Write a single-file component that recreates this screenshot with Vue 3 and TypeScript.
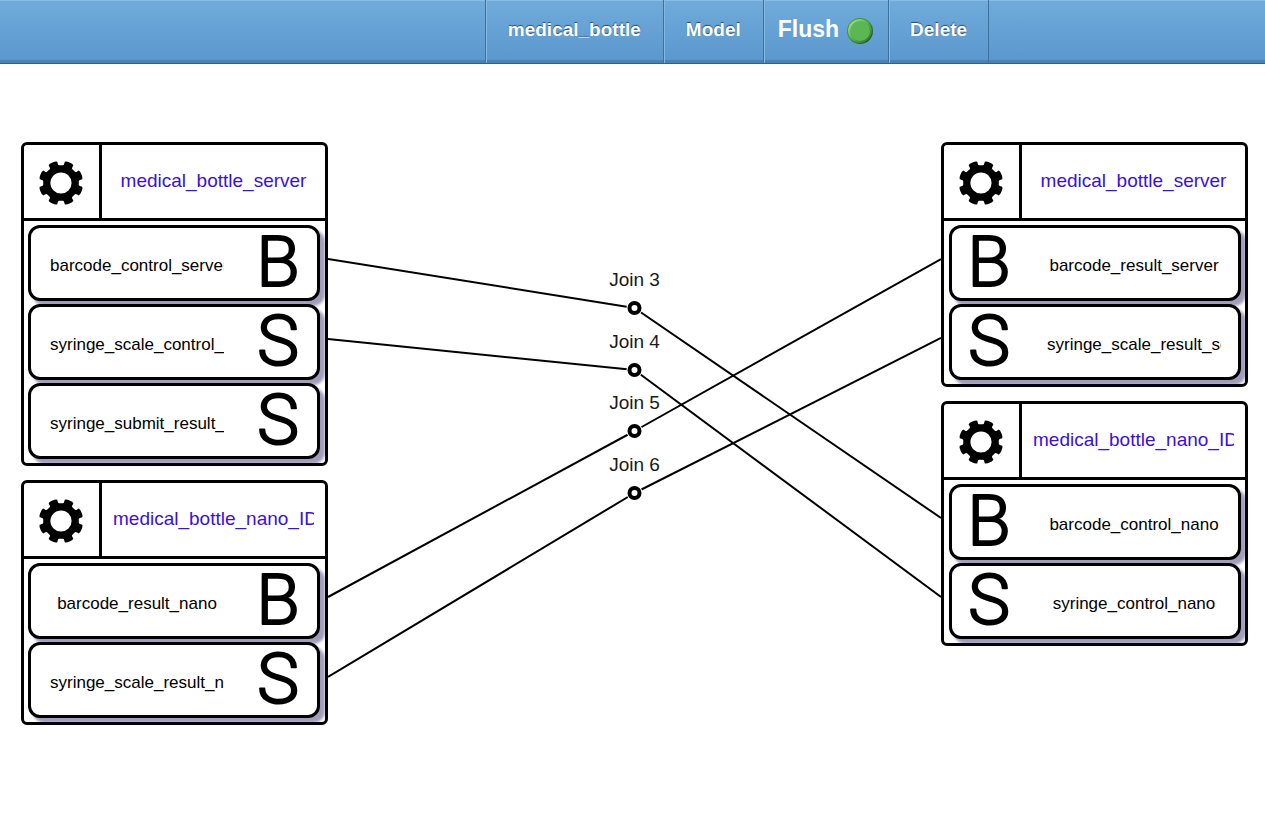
<script setup lang="ts">
interface Port {
  kind: 'B' | 'S'
  label: string
}
interface Node {
  title: string
  ports: Port[]
}
interface Join {
  label: string
  y: number
  from: number
  to: number
}

const columns: { side: 'left' | 'right'; nodes: Node[] }[] = [
  {
    side: 'left',
    nodes: [
      {
        title: 'medical_bottle_server',
        ports: [
          { kind: 'B', label: 'barcode_control_server' },
          { kind: 'S', label: 'syringe_scale_control_server' },
          { kind: 'S', label: 'syringe_submit_result_server' },
        ],
      },
      {
        title: 'medical_bottle_nano_ID',
        ports: [
          { kind: 'B', label: 'barcode_result_nano' },
          { kind: 'S', label: 'syringe_scale_result_nano' },
        ],
      },
    ],
  },
  {
    side: 'right',
    nodes: [
      {
        title: 'medical_bottle_server',
        ports: [
          { kind: 'B', label: 'barcode_result_server' },
          { kind: 'S', label: 'syringe_scale_result_server' },
        ],
      },
      {
        title: 'medical_bottle_nano_ID',
        ports: [
          { kind: 'B', label: 'barcode_control_nano' },
          { kind: 'S', label: 'syringe_control_nano' },
        ],
      },
    ],
  },
]

const joins: Join[] = [
  { label: 'Join 3', y: 166, from: 117, to: 376 },
  { label: 'Join 4', y: 228, from: 197, to: 455 },
  { label: 'Join 5', y: 289, from: 455, to: 117 },
  { label: 'Join 6', y: 351, from: 535, to: 196 },
]

// Outline of an eight-tooth gear around the origin
function gearOutline(): string {
  const at = (r: number, deg: number): string => {
    const a = (deg * Math.PI) / 180
    return `${(r * Math.cos(a)).toFixed(2)} ${(r * Math.sin(a)).toFixed(2)}`
  }
  let d = ''
  for (let i = 0; i < 8; i++) {
    const c = 22.5 + i * 45
    d += `${i ? 'L' : 'M'}${at(21.6, c - 12.5)} Q${at(22.6, c - 9)} ${at(22.2, c)} Q${at(22.6, c + 9)} ${at(21.6, c + 12.5)} `
    d += `L${at(19.8, c + 13)} Q${at(18.4, c + 13)} ${at(17.9, c + 16)} L${at(17.9, c + 29)} Q${at(18.4, c + 32)} ${at(19.8, c + 32)} `
  }
  return d + 'Z M10.6 0 A10.6 10.6 0 1 0 -10.6 0 A10.6 10.6 0 1 0 10.6 0 Z'
}
const gear = gearOutline()
</script>

<template>
  <div class="page">
    <nav class="bar">
      <a class="tab" href="#">medical_bottle</a>
      <a class="tab" href="#">Model</a>
      <a class="tab flush" href="#">
        Flush
        <svg class="dot" viewBox="0 0 28 28" aria-hidden="true">
          <defs>
            <linearGradient id="rim" x1="0" y1="0" x2="1" y2="1">
              <stop offset="0.1" stop-color="#4a9a3c" />
              <stop offset="0.5" stop-color="#3f8a35" />
              <stop offset="0.9" stop-color="#1d4a1c" />
            </linearGradient>
            <linearGradient id="bevel" x1="0" y1="0" x2="1" y2="1">
              <stop offset="0.1" stop-color="#a2e08c" />
              <stop offset="0.45" stop-color="#5cb653" />
              <stop offset="0.9" stop-color="#2f7a2c" />
            </linearGradient>
          </defs>
          <circle cx="14" cy="14" r="13" fill="url(#rim)" />
          <circle cx="14" cy="14" r="12" fill="url(#bevel)" />
          <circle cx="14" cy="14" r="10" fill="#5cb653" />
        </svg>
      </a>
      <a class="tab last" href="#">Delete</a>
    </nav>

    <main class="board">
      <template v-for="col in columns" :key="col.side">
        <section class="column" :class="col.side">
          <article v-for="node in col.nodes" :key="node.title" class="card">
            <header class="head">
              <button class="gear" type="button" aria-label="Settings">
                <svg viewBox="-24 -24 48 48"><path :d="gear" fill-rule="evenodd" /></svg>
              </button>
              <div class="title"><a href="#">{{ node.title }}</a></div>
            </header>
            <ul class="ports">
              <li v-for="port in node.ports" :key="port.label" class="port">
                <span class="name"><span>{{ port.label }}</span></span>
                <svg class="kind" viewBox="0 0 76 70">
                  <text x="37" y="58">{{ port.kind }}</text>
                </svg>
              </li>
            </ul>
          </article>
        </section>

        <svg v-if="col.side === 'left'" class="wires">
          <g v-for="j in joins" :key="j.label">
            <line x1="0" :y1="j.from" x2="50%" :y2="j.y" />
            <line x1="50%" :y1="j.y" x2="100%" :y2="j.to" />
          </g>
          <g v-for="j in joins" :key="j.label">
            <circle class="halo" cx="50%" :cy="j.y" r="8" />
            <circle class="ring" cx="50%" :cy="j.y" r="5" />
            <text x="50%" :y="j.y - 22">{{ j.label }}</text>
          </g>
        </svg>
      </template>
    </main>
  </div>
</template>

<style>
body {
  margin: 0;
  background: #fff;
}
</style>

<style scoped>
.page {
  min-height: 100vh;
  font-family: "Liberation Sans", Arial, sans-serif;
  color: #000;
}
.bar {
  display: grid;
  grid-template-columns: 485fr auto auto auto auto 276fr;
  height: 64px;
  box-sizing: border-box;
  border-bottom: 1px solid #2f5f8c;
  background: linear-gradient(#70abdb, #5a97cd);
  box-shadow: inset 0 1px 0 #8bbce2, inset 0 -3px 0 #4b82b4;
}
.tab {
  display: flex;
  align-items: center;
  padding: 0 22px 4px;
  border-left: 1px solid #3d719f;
  box-shadow: inset 1px 0 0 #86b8e0;
  color: #fff;
  font-size: 19px;
  font-weight: bold;
  text-decoration: none;
  text-shadow: 0 -1px 1px #234f78;
}
.tab:first-child {
  grid-column: 2;
}
.tab.last {
  padding: 0 21px 4px;
  border-right: 1px solid #3d719f;
}
.tab.flush {
  gap: 7px;
  padding: 0 14px 4px;
  font-size: 23px;
  text-shadow: none;
}
.dot {
  width: 28px;
  height: 28px;
  margin-top: 2px;
}
.board {
  display: flex;
  padding: 78px 17px 24px 21px;
}
.column {
  display: flex;
  flex-direction: column;
  gap: 14px;
  flex: 0 0 307px;
  min-width: 0;
}
.card {
  border: 3px solid #000;
  border-radius: 6px;
  background: #fff;
}
.head {
  display: flex;
  height: 73px;
  border-bottom: 3px solid #000;
}
.gear {
  display: flex;
  flex: 0 0 78px;
  align-items: center;
  justify-content: center;
  box-sizing: border-box;
  padding: 2px 2px 0 0;
  border: 0;
  border-right: 3px solid #000;
  background: none;
}
.gear svg {
  width: 48px;
  height: 48px;
}
.title {
  display: flex;
  flex: 1;
  align-items: center;
  min-width: 0;
  padding: 0 11px 2px;
}
.title a {
  flex: 1;
  min-width: 0;
  overflow: hidden;
  color: #3a10dc;
  font-size: 19px;
  line-height: 26px;
  text-align: center;
  text-decoration: none;
  white-space: nowrap;
}
.ports {
  display: flex;
  flex-direction: column;
  gap: 3px;
  margin: 0;
  padding: 4px 5px 4px 4px;
  list-style: none;
}
.right .ports {
  padding: 4px 4px 4px 5px;
}
.port {
  display: flex;
  align-items: center;
  justify-content: space-between;
  height: 76px;
  box-sizing: border-box;
  padding-left: 19px;
  border: 3px solid #000;
  border-radius: 12px;
  background: #fff;
  box-shadow: 5px 5px 3px rgba(20, 10, 80, 0.4);
}
.right .port {
  flex-direction: row-reverse;
  padding: 0 17px 0 0;
}
.name {
  display: flex;
  justify-content: center;
  width: 174px;
  padding-top: 5px;
}
.name span {
  overflow: hidden;
  font-size: 17px;
  line-height: 24px;
  white-space: nowrap;
}
.kind {
  width: 76px;
  height: 70px;
}
.kind text {
  font-family: Roboto, "Liberation Sans", sans-serif;
  font-size: 71px;
  font-weight: 300;
  text-anchor: middle;
  stroke: #000;
  stroke-width: 2px;
  stroke-linejoin: round;
}
.wires {
  flex: 1;
  min-width: 0;
  height: 584px;
}
.wires line {
  stroke: #000;
  stroke-width: 2px;
}
.halo {
  fill: #fff;
}
.ring {
  fill: #fff;
  stroke: #000;
  stroke-width: 4px;
}
.wires text {
  fill: #1a1a1a;
  font-size: 19px;
  text-anchor: middle;
}
</style>
